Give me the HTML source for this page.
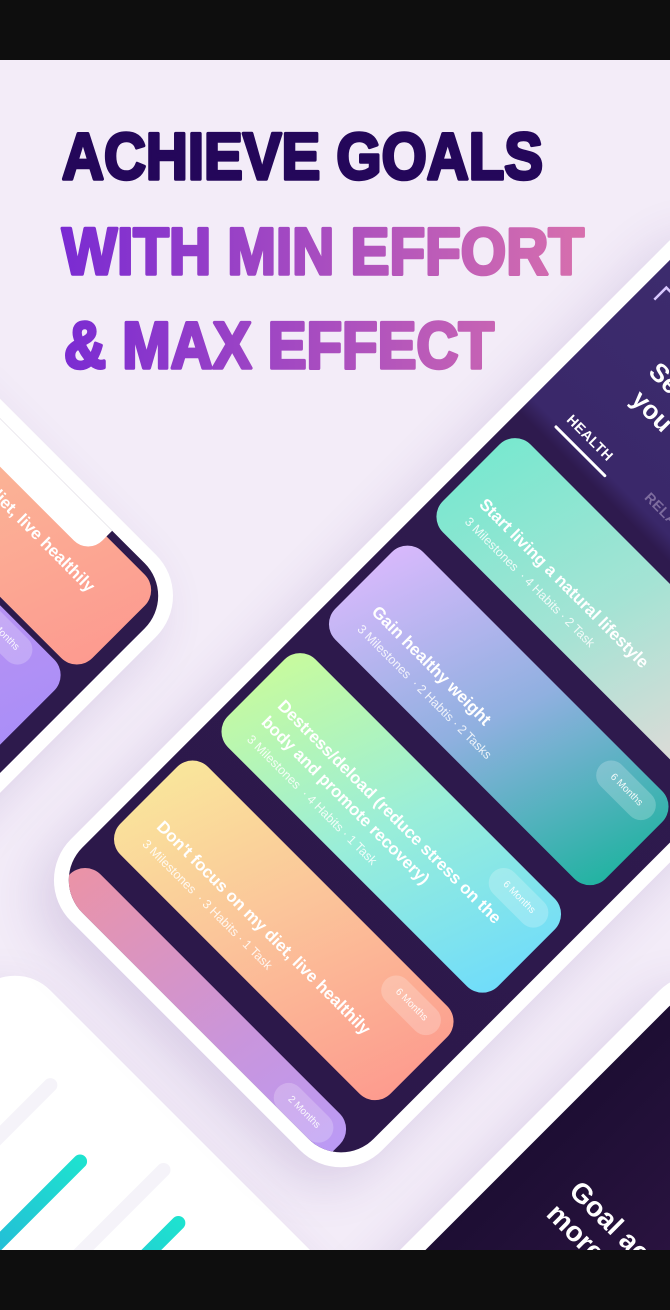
<!DOCTYPE html>
<html><head><meta charset="utf-8"><style>
*{margin:0;padding:0;box-sizing:border-box}
html,body{width:670px;height:1310px;overflow:hidden;background:#f3ecf8;font-family:"Liberation Sans",sans-serif}
#wrap{position:relative;width:670px;height:1310px;overflow:hidden;background:#f3ecf8}
.bar{position:absolute;left:0;width:670px;height:60px;background:#0e0e0e;z-index:50}
.f{position:absolute;transform:rotate(45deg);transform-origin:0 0}
.abs{position:absolute}
.phone{position:absolute;background:#fff;border-radius:58px;box-shadow:0 24px 50px rgba(90,50,140,.16)}
.scr{position:absolute;overflow:hidden;border-radius:46px}
.card{position:absolute;width:382px;height:124px;border-radius:22px;color:#fff}
.t{position:absolute;left:28px;font-size:17px;font-weight:bold;white-space:nowrap;line-height:1}
.s{position:absolute;left:30px;font-size:12.5px;white-space:nowrap;opacity:.85;line-height:1}
.b{position:absolute;right:12px;top:10px;width:72px;height:30px;border-radius:15px;background:rgba(255,255,255,.22);font-size:10px;color:rgba(255,255,255,.9);text-align:center;line-height:30px}
</style></head><body>
<div id="wrap">
<div class="bar" style="top:0"></div>
<div class="bar" style="top:1250px"></div>

<svg class="abs" style="left:0;top:0" width="670" height="400">
<defs><linearGradient id="g" gradientUnits="userSpaceOnUse" x1="62" y1="0" x2="590" y2="0"><stop offset="0" stop-color="#7a2bd2"/><stop offset="1" stop-color="#d870ad"/></linearGradient></defs>
<g font-family="Liberation Sans" font-weight="bold" font-size="66" stroke-width="3.5" stroke-linejoin="round">
<text x="62" y="179" fill="#24075a" stroke="#24075a" textLength="481" lengthAdjust="spacingAndGlyphs">ACHIEVE GOALS</text>
<text x="62" y="274" fill="url(#g)" stroke="url(#g)" textLength="522" lengthAdjust="spacingAndGlyphs">WITH MIN EFFORT</text>
<text x="64" y="368" fill="url(#g)" stroke="url(#g)" textLength="430" lengthAdjust="spacingAndGlyphs">&amp; MAX EFFECT</text>
</g>
</svg>

<!-- left phone -->
<div class="f" style="left:214px;top:593px">
 <div class="phone" style="left:-450px;top:14px;width:440px;height:900px">
  <div class="scr" style="left:14px;top:14px;width:412px;height:872px;background:#2d1a4c">
   <div class="card" style="left:16px;top:8px;width:380px;height:118px;background:linear-gradient(110deg,#f9c79a,#fd9a90)"></div>
   <div class="abs" style="left:100px;top:0;width:220px;height:34px;background:#fff;border-radius:0 0 20px 20px"></div>
   <div class="card" style="left:12px;top:132px;width:380px;height:124px;background:linear-gradient(110deg,#d39ae8,#a98ef8)"><div class="b" style="top:4px;right:40px">2 Months</div></div>
  </div>
 </div>
 <div class="abs" style="left:-400px;top:74px;width:311px;text-align:right;font-size:17px;font-weight:bold;color:#fff;white-space:nowrap">Don't focus on my diet, live healthily</div>
</div>

<!-- bottom-left white card -->
<div class="f" style="left:15px;top:955px">
 <div class="abs" style="left:0;top:0;width:520px;height:640px;background:#fff;border-radius:50px;box-shadow:0 20px 50px rgba(90,50,140,.14)">
  <div class="abs" style="left:110px;top:60px;width:14px;height:300px;border-radius:7px;background:#f5f3f9"></div>
  <div class="abs" style="left:185px;top:93px;width:14px;height:300px;border-radius:7px;background:linear-gradient(#1ee3cf,#2a8ee0)"></div>
  <div class="abs" style="left:250px;top:40px;width:14px;height:300px;border-radius:7px;background:#f5f3f9"></div>
  <div class="abs" style="left:298px;top:67px;width:14px;height:300px;border-radius:7px;background:linear-gradient(#1ee3cf,#2a8ee0)"></div>
  <div class="abs" style="left:370px;top:50px;width:14px;height:300px;border-radius:7px;background:#f5f3f9"></div>
 </div>
</div>

<!-- bottom-right phone -->
<div class="f" style="left:700px;top:950px">
 <div class="phone" style="left:0;top:0;width:440px;height:900px">
  <div class="scr" style="left:18px;top:18px;width:404px;height:864px;background:linear-gradient(90deg,#1d0e33 0%,#2a1340 45%,#5a2a52 100%)">
   <div class="abs" style="left:60px;top:222px;font-size:28px;font-weight:bold;color:#fff;white-space:nowrap;line-height:32px">Goal achieved<br>more</div>
  </div>
 </div>
</div>

<!-- main phone -->
<div class="f" style="left:515px;top:429px">
 <div class="phone" style="left:-24px;top:-300px;width:440px;height:962px">
  <div class="scr" style="left:14px;top:14px;width:412px;height:934px;background:linear-gradient(180deg,#3d2c6e 0%,#3a286a 27%,#2e1a4e 29%,#2c184a 100%)">
   <svg class="abs" style="left:14px;top:76px" width="24" height="24"><path d="M3 20 V3 H20" stroke="#d9c8ff" stroke-width="2.5" fill="none"/></svg>
   <div class="abs" style="left:64px;top:128px;font-size:26px;font-weight:bold;color:#fff;white-space:nowrap;line-height:32px">Select the goal<br>&nbsp;you want to achieve</div>
   <div class="abs" style="left:40px;top:231px;font-size:14px;font-weight:bold;color:#fff;letter-spacing:.5px">HEALTH</div>
   <div class="abs" style="left:36px;top:254px;width:72px;height:3px;background:#fff;border-radius:2px"></div>
   <div class="abs" style="left:150px;top:231px;font-size:14px;font-weight:bold;color:#7d6c9e;letter-spacing:.5px">RELATIONSHIP</div>

   <div class="card" style="left:10px;top:286px;background:linear-gradient(105deg,#78e8cf 0%,#a4e3d4 50%,#e8d9d8 100%)">
    <div class="t" style="top:66px">Start living a natural lifestyle</div>
    <div class="s" style="top:92px">3 Milestones &nbsp;· 4 Habits · 2 Task</div>
   </div>
   <div class="card" style="left:10px;top:438px;background:linear-gradient(110deg,#dab9fd 0%,#90b0e0 50%,#1fb3a0 100%)">
    <div class="t" style="top:66px">Gain healthy weight</div>
    <div class="s" style="top:92px">3 Milestones &nbsp;· 2 Habtis · 2 Tasks</div>
    <div class="b">6 Months</div>
   </div>
   <div class="card" style="left:10px;top:590px;background:linear-gradient(110deg,#c9fb9c 0%,#9aeed8 50%,#6fdcfb 100%)">
    <div class="t" style="top:44px;line-height:23px">Destress/deload (reduce stress on the<br>body and promote recovery)</div>
    <div class="s" style="top:96px">3 Milestones &nbsp;· 4 Habits · 1 Task</div>
    <div class="b">6 Months</div>
   </div>
   <div class="card" style="left:10px;top:742px;background:linear-gradient(110deg,#f9e79b 0%,#fbc59a 45%,#fd9a8e 100%)">
    <div class="t" style="top:66px">Don't focus on my diet, live healthily</div>
    <div class="s" style="top:92px">3 Milestones &nbsp;· 3 Habits · 1 Task</div>
    <div class="b">6 Months</div>
   </div>
   <div class="card" style="left:10px;top:894px;background:linear-gradient(100deg,#eb93a6 0%,#c995dc 60%,#b99bf8 100%)">
    <div class="b">2 Months</div>
   </div>
  </div>
 </div>
</div>
</div>
</body></html>
